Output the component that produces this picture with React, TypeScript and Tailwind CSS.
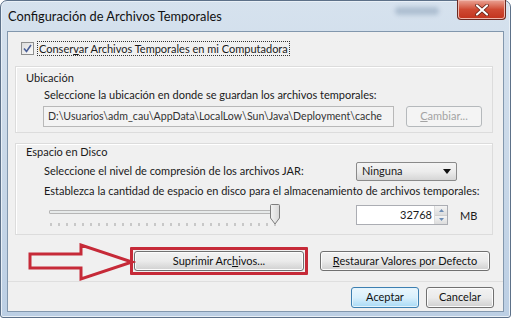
import React from "react";

const font = { fontFamily: "Lato, 'Noto Sans', sans-serif" };

const Btn: React.FC<{
  children: React.ReactNode;
  className?: string;
  primary?: boolean;
  disabled?: boolean;
}> = ({ children, className = "", primary, disabled }) => (
  <div
    className={`flex items-center justify-center rounded-[3px] border text-[11px] ${
      disabled
        ? "border-[#b5b9bc] bg-[#f4f4f4] text-[#a3a3a3]"
        : primary
          ? "border-[#3c7fb1] bg-gradient-to-b from-[#eaf6fd] via-[#d9f0fc] to-[#a7d9f5] text-[#111] shadow-[inset_0_0_0_1px_#e5f4fc]"
          : "border-[#707070] bg-gradient-to-b from-[#f2f2f2] via-[#ebebeb] to-[#d0d0d0] text-[#111] shadow-[inset_0_0_0_1px_#fcfcfc]"
    } ${className}`}
  >
    {children}
  </div>
);

export default function App() {
  const ticks = Array.from({ length: 29 }, (_, i) => i);
  return (
    <div className="w-[514px] h-[322px] bg-white overflow-hidden relative" style={font}>
      {/* window frame */}
      <div className="w-[511px] h-[318px] rounded-t-[7px] rounded-b-[3px] border border-[#5d7189] bg-gradient-to-b from-[#d6e2ee] via-[#c9d8e8] to-[#bccfe4] flex flex-col px-[6px] pb-[5px] shadow-[inset_0_0_0_1px_#e9f0f7]">
        {/* title bar */}
        <div className="h-[30px] relative shrink-0">
          <span className="absolute left-[1px] top-[6px] text-[12.8px] text-[#111]">
            Configuración de Archivos Temporales
          </span>
          <div className="absolute left-[388px] top-[6px] w-[44px] h-[8px] rounded-full bg-[#aebfd1] blur-[2px]" />
          <div className="absolute right-[-2px] top-[-1px] w-[49px] h-[20px] rounded-b-[4px] border border-[#6b2a22] border-t-0 bg-gradient-to-b from-[#e9a395] via-[#cf4a33] to-[#c2321c] flex items-center justify-center shadow-[inset_0_0_0_1px_#f0b8ad]">
            <svg width="14" height="12" viewBox="0 0 14 12">
              <path d="M2 1.5 L12 10.5 M12 1.5 L2 10.5" stroke="#5a1a10" strokeWidth="3.6" strokeLinecap="round" />
              <path d="M2 1.5 L12 10.5 M12 1.5 L2 10.5" stroke="#ffffff" strokeWidth="2.2" strokeLinecap="round" />
            </svg>
          </div>
        </div>

        {/* client area */}
        <div className="flex-1 bg-[#f0f0f0] border border-[#8297ad] flex flex-col text-[11px] text-[#1a1a1a]">
          <div className="h-[249px] px-[7px] relative">
            {/* checkbox */}
            <div className="flex items-center mt-[10px] ml-[6px] h-[13px]">
              <div className="w-[13px] h-[13px] border border-[#8e8f8f] bg-gradient-to-br from-[#dcdcdc] to-[#fbfbfb] flex items-center justify-center">
                <svg width="9" height="9" viewBox="0 0 9 9">
                  <path d="M1 4.5 L3.5 7.5 L8 1" stroke="#4a5f97" strokeWidth="1.6" fill="none" />
                </svg>
              </div>
              <span className="ml-[3px] px-[1px] border border-dotted border-[#333] leading-[13px]">
                Conser<span className="underline">v</span>ar Archivos Temporales en mi Computadora
              </span>
            </div>

            {/* Ubicación */}
            <div className="mt-[11px] h-[67px] border border-[#dcdcdc] shadow-[inset_1px_1px_0_#fff] pl-[10px] mr-[3px]">
              <div className="mt-[4px] leading-[14px]">Ubicación</div>
              <div className="ml-[18px] mt-[3px] leading-[14px]">
                Seleccione la ubicación en donde se guardan los archivos temporales:
              </div>
              <div className="flex ml-[17px] mt-[4px] gap-[12px]">
                <div className="w-[351px] h-[21px] border border-[#b8b8b8] bg-[#f3f3f3] flex items-center pl-[4px] text-[#333] text-[10.6px] whitespace-nowrap overflow-hidden">
                  D:\Usuarios\adm_cau\AppData\LocalLow\Sun\Java\Deployment\cache
                </div>
                <Btn disabled className="w-[76px] h-[21px]">
                  <span>
                    <span className="underline">C</span>ambiar...
                  </span>
                </Btn>
              </div>
            </div>

            {/* Espacio en Disco */}
            <div className="mt-[10px] h-[92px] border border-[#dcdcdc] shadow-[inset_1px_1px_0_#fff] pl-[10px] mr-[3px]">
              <div className="mt-[1px] leading-[14px]">Espacio en Disco</div>
              <div className="flex items-center ml-[18px] mt-[2px] h-[20px]">
                <span className="w-[312px]">Seleccione el nivel de compresión de los archivos JAR:</span>
                <div className="w-[101px] h-[19px] rounded-[2px] border border-[#8a8a8a] bg-gradient-to-b from-[#f4f4f4] via-[#ececec] to-[#d6d6d6] flex items-center justify-between pl-[5px] pr-[5px]">
                  <span>Ninguna</span>
                  <svg width="8" height="5" viewBox="0 0 8 5">
                    <path d="M0 0 H8 L4 5 Z" fill="#111" />
                  </svg>
                </div>
              </div>
              <div className="ml-[18px] mt-[3px] leading-[14px]">
                Establezca la cantidad de espacio en disco para el almacenamiento de archivos temporales:
              </div>
              <div className="flex ml-[23px] mt-[6px]">
                <div className="w-[234px] relative h-[24px]">
                  <div className="absolute left-0 right-[8px] top-[6px] h-[4px] border border-[#b6b6b6] bg-[#e7eaea] rounded-[1px]" />
                  <div className="absolute left-[1px] top-[19px] flex gap-[6px]">
                    {ticks.map((t) => (
                      <div key={t} className="w-[2px] h-[3px] bg-[#c8c8c8]" />
                    ))}
                  </div>
                  <svg className="absolute left-[220px] top-0" width="12" height="21" viewBox="0 0 12 21">
                    <defs>
                      <linearGradient id="th" x1="0" x2="1" y1="0" y2="0">
                        <stop offset="0" stopColor="#f3f3f3" />
                        <stop offset="1" stopColor="#d8d8d8" />
                      </linearGradient>
                    </defs>
                    <path d="M1.5 1.5 Q1.5 0.5 2.5 0.5 H9.5 Q10.5 0.5 10.5 1.5 V14 L6 20 L1.5 14 Z" fill="url(#th)" stroke="#7d7d7d" />
                  </svg>
                </div>
                <div className="ml-[73px] mt-[1px] w-[92px] h-[20px] border border-[#abadb3] bg-white flex items-center">
                  <span className="flex-1 text-right pr-[2px]">32768</span>
                  <div className="w-[13px] h-full flex flex-col border-l border-[#dcdcdc]">
                    <div className="flex-1 bg-gradient-to-b from-[#f4f4f4] to-[#dcdcdc] flex items-center justify-center border-b border-[#cfcfcf]">
                      <svg width="5" height="3" viewBox="0 0 5 3"><path d="M0 3 L2.5 0 L5 3 Z" fill="#6d8db5" /></svg>
                    </div>
                    <div className="flex-1 bg-gradient-to-b from-[#f4f4f4] to-[#dcdcdc] flex items-center justify-center">
                      <svg width="5" height="3" viewBox="0 0 5 3"><path d="M0 0 L5 0 L2.5 3 Z" fill="#6d8db5" /></svg>
                    </div>
                  </div>
                </div>
                <span className="ml-[12px] mt-[4px]">MB</span>
              </div>
            </div>

            {/* action row */}
            <div className="flex justify-end gap-[16px] pr-[6px] mt-[16px]">
              <div className="relative">
                <Btn className="w-[170px] h-[20px]">
                  <span>
                    Suprimir Arc<span className="underline">h</span>ivos...
                  </span>
                </Btn>
                <div className="absolute -left-[4px] -right-[4px] -top-[4px] -bottom-[4px] border-[3px] border-[#c62a38] rounded-[1px]" />
              </div>
              <Btn className="w-[170px] h-[20px]">
                <span>
                  <span className="underline">R</span>estaurar Valores por Defecto
                </span>
              </Btn>
            </div>

            {/* annotation arrow */}
            <svg className="absolute left-[20px] top-[211px]" width="108" height="40" viewBox="0 0 108 40">
              <path d="M2 11 H53 V2 L104 19 L53 36 V25 H2 Z" fill="none" stroke="#c62a38" strokeWidth="3" strokeLinejoin="miter" />
            </svg>
          </div>

          {/* footer */}
          <div className="flex-1 border-t border-[#dfdfdf] flex justify-end items-start pt-[5px] gap-[7px] pr-[9px]">
            <Btn primary className="w-[68px] h-[21px]">Aceptar</Btn>
            <Btn className="w-[68px] h-[21px]">Cancelar</Btn>
          </div>
        </div>
      </div>
    </div>
  );
}
